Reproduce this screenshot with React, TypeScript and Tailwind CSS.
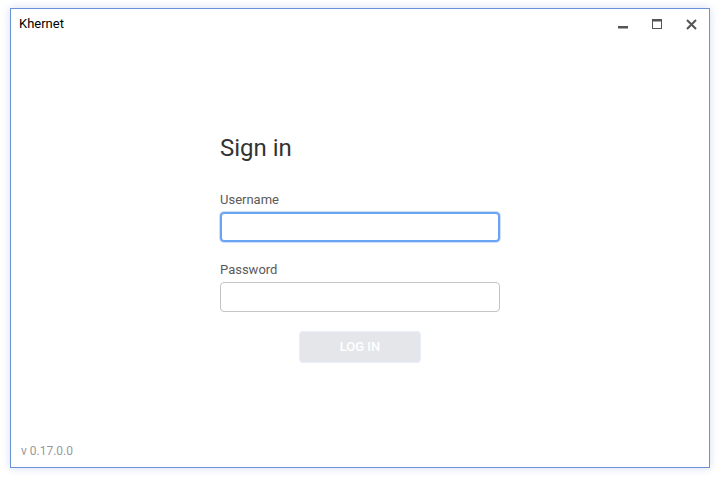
function MinIcon() {
  return (
    <svg width="10" height="10" viewBox="0 0 10 10" className="block">
      <rect x="0" y="7" width="10" height="2.5" fill="#555" />
    </svg>
  );
}

function MaxIcon() {
  return (
    <svg width="10" height="10" viewBox="0 0 10 10" className="block">
      <rect x="0.5" y="0.5" width="9" height="9" fill="none" stroke="#555" strokeWidth="1" />
      <rect x="0.5" y="0.5" width="9" height="2" fill="#555" />
    </svg>
  );
}

function CloseIcon() {
  return (
    <svg width="11" height="11" viewBox="0 0 11 11" className="block">
      <path d="M1 1 L10 10 M10 1 L1 10" stroke="#555" strokeWidth="2" />
    </svg>
  );
}

export default function App() {
  return (
    <div className="w-[719px] h-[478px] bg-white pt-[8px] pl-[10px]" style={{ fontFamily: 'Roboto, "Liberation Sans", sans-serif' }}>
      <div className="w-[700px] h-[460px] border border-[#6b8fd8] bg-white shadow-[0_0_8px_rgba(90,120,200,0.25)] flex flex-col">
        {/* Title bar */}
        <div className="flex items-center h-[28px] pl-[8px] pr-[12px]">
          <span className="text-[13px] text-black flex-1 pt-[1px]">Khernet</span>
          <div className="flex items-center gap-[24px] pt-[2px]">
            <MinIcon />
            <MaxIcon />
            <CloseIcon />
          </div>
        </div>

        {/* Form */}
        <div className="flex-1 flex flex-col items-center">
          <div className="w-[280px] mt-[97px]">
            <h1 className="text-[24px] text-[#333] leading-[28px]">Sign in</h1>
            <label className="block mt-[30px] text-[13px] text-[#5a5a5a] leading-[16px]">Username</label>
            <input
              className="block mt-[4px] w-[280px] h-[30px] rounded-[4px] border-2 border-[#6aa3f2] ring-1 ring-[#cfe0fa] outline-none px-2 text-[14px]"
            />
            <label className="block mt-[20px] text-[13px] text-[#5a5a5a] leading-[16px]">Password</label>
            <input
              type="password"
              className="block mt-[4px] w-[280px] h-[30px] rounded-[4px] border border-[#c4c4c4] outline-none px-2 text-[14px]"
            />
            <div className="flex justify-center mt-[19px]">
              <button className="w-[122px] h-[32px] rounded-[4px] bg-[#e4e6ea] border border-[#e9eefa] text-white text-[13px] font-medium">
                LOG IN
              </button>
            </div>
          </div>
        </div>

        {/* Footer */}
        <div className="h-[32px] pt-[7px] pl-[10px] text-[12px] text-[#999]">v 0.17.0.0</div>
      </div>
    </div>
  );
}
